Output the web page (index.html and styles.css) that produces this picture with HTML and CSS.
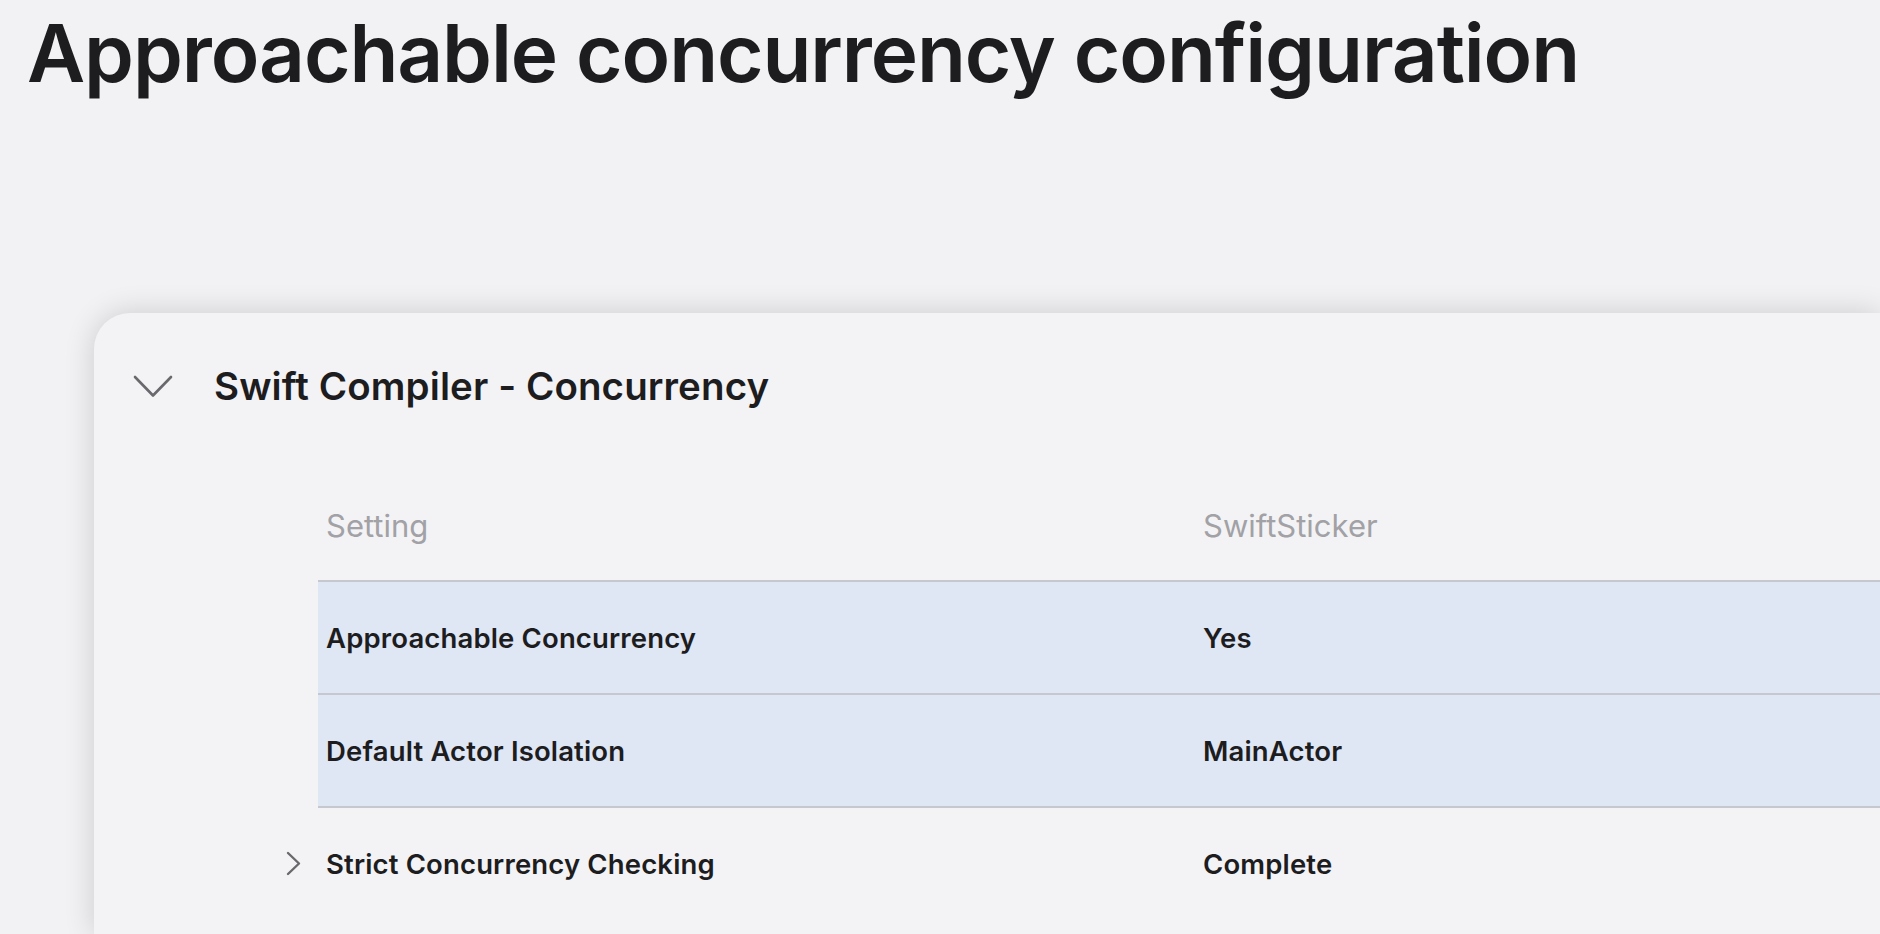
FILE: index.html
```html
<!DOCTYPE html>
<html lang="en">
<head>
<meta charset="utf-8">
<title>Approachable concurrency configuration</title>
<link rel="stylesheet" href="styles.css">
</head>
<body>
  <h1 class="title">Approachable concurrency configuration</h1>
  <section class="card">
    <div class="section-head">
      <svg class="chev-down" width="40" height="23" viewBox="0 0 40 23" aria-hidden="true">
        <polyline points="2,2 20,20.5 38,2" fill="none" stroke="#68686d" stroke-width="2.6" stroke-linecap="round" stroke-linejoin="round"/>
      </svg>
      <h2 class="section-title">Swift Compiler - Concurrency</h2>
    </div>
    <div class="table">
      <div class="row header">
        <div class="cell name">Setting</div>
        <div class="cell value">SwiftSticker</div>
      </div>
      <div class="row item selected">
        <div class="cell name">Approachable Concurrency</div>
        <div class="cell value">Yes</div>
      </div>
      <div class="row item selected">
        <div class="cell name">Default Actor Isolation</div>
        <div class="cell value">MainActor</div>
      </div>
      <div class="row item">
        <div class="cell name">
          <svg class="chev-right" width="15" height="25" viewBox="0 0 15 25" aria-hidden="true">
            <polyline points="2,2 13,12.5 2,23" fill="none" stroke="#68686d" stroke-width="2.4" stroke-linecap="round" stroke-linejoin="round"/>
          </svg>
          <span>Strict Concurrency Checking</span>
        </div>
        <div class="cell value">Complete</div>
      </div>
    </div>
  </section>
</body>
</html>
```
FILE: styles.css
```css
html, body {
  margin: 0;
  padding: 0;
  overflow: hidden;
}

body {
  width: 1880px;
  height: 934px;
  background: #f2f2f4;
  font-family: "Inter", "Noto Sans", sans-serif;
  color: #1d1d1f;
}

.title {
  margin: 0;
  padding: 13px 0 0 27px;
  font-size: 80px;
  line-height: 80px;
  font-weight: 600;
  letter-spacing: -1.1px;
  color: #1d1d1f;
}

.card {
  margin: 220px 0 0 94px;
  width: 1786px;
  height: 621px;
  background: #f3f3f5;
  border-radius: 36px 0 0 0;
  box-shadow: 0 0 30px rgba(0, 0, 0, 0.16);
  padding-top: 53px;
  box-sizing: border-box;
}

.section-head {
  display: flex;
  align-items: center;
  padding-left: 39px;
  height: 40px;
}

.chev-down {
  display: block;
  flex: none;
}

.section-title {
  margin: 0 0 0 41px;
  font-size: 38.5px;
  line-height: 40px;
  font-weight: 600;
  letter-spacing: 0.1px;
}

.table {
  margin: 65px 0 0 224px;
}

.row {
  display: flex;
  align-items: center;
  padding-left: 8px;
}

.row.header {
  height: 109px;
  font-size: 31px;
  font-weight: 400;
  color: #a1a1a6;
}

.row.item {
  height: 111px;
  border-top: 2px solid #c5c8ce;
  font-size: 27.5px;
  font-weight: 600;
  letter-spacing: 0.15px;
  color: #1d1d1f;
}

.row.selected {
  background: #dfe6f4;
}

.cell.name {
  width: 877px;
  flex: none;
  display: flex;
  align-items: center;
}

.cell.value {
  flex: 1;
}

.chev-right {
  display: block;
  flex: none;
  margin-left: -40px;
  margin-right: 25px;
}
```
